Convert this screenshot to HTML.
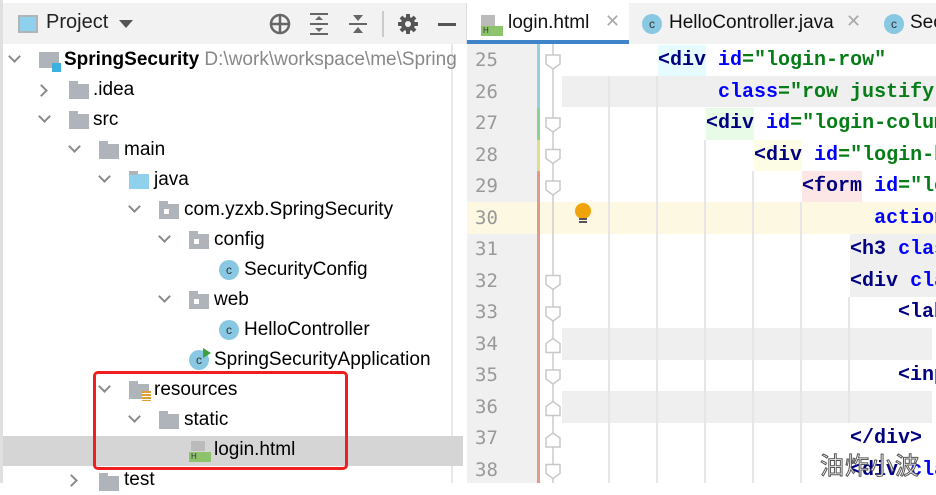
<!DOCTYPE html>
<html><head><meta charset="utf-8"><style>
*{margin:0;padding:0;box-sizing:border-box}
body{width:936px;height:483px;overflow:hidden;background:#fff;position:relative;font-family:"Liberation Sans","Noto Sans CJK SC",sans-serif}
.abs{position:absolute}
#left{left:0;top:0;width:466px;height:483px;background:#fff;border-left:3px solid #e0e0e0}
#lhead{left:3px;top:3px;width:463px;height:41px;background:#f2f2f2}
.row{position:absolute;left:0;height:30px;line-height:30px;font-size:19px;color:#000;white-space:nowrap}
.chev{position:absolute;width:9px;height:9px;border-right:2px solid #8a8a8a;border-bottom:2px solid #8a8a8a}
.down{transform:rotate(45deg)}
.right{transform:rotate(-45deg)}
.fold{position:absolute;width:20px;height:15px;background:#aeb4b9}
.fold:before{content:"";position:absolute;left:0;top:-3px;width:9px;height:4px;background:#aeb4b9}
.cic{position:absolute;width:20px;height:20px;border-radius:50%;background:#88c8e3;color:#333;font-size:12px;line-height:20px;text-align:center;font-family:"Liberation Sans",sans-serif}
#ed{left:466px;top:0;width:470px;height:483px;background:#fff}
.code{position:absolute;left:562px;font-family:"Liberation Mono","DejaVu Sans Mono",monospace;font-size:20px;font-weight:bold;white-space:pre;color:#000080;line-height:31.5px}
.ln{position:absolute;left:475px;width:40px;font-family:"DejaVu Sans Mono",monospace;font-size:19px;color:#999;line-height:31.5px}
.at{color:#0000ff}.st{color:#067d17}
.guide{position:absolute;width:2px;background:#e6e6e6}
</style></head><body>
<div class="abs" style="left:0;top:0;width:936px;height:3px;background:#d6d6d6"></div>
<div id="left" class="abs"></div>
<div id="lhead" class="abs"></div>
<div class="abs" style="left:18px;top:15px;width:20px;height:18px;border:2px solid #aeb4b9;background:#8fd0ec"></div>
<div class="abs" style="left:46px;top:11px;font-size:20px;color:#222">Project</div>
<div class="abs" style="left:119px;top:20px;width:0;height:0;border-left:7px solid transparent;border-right:7px solid transparent;border-top:8px solid #555"></div>
<svg class="abs" style="left:268px;top:12px" width="24" height="24"><circle cx="12" cy="12" r="9" fill="none" stroke="#666" stroke-width="2.5"/><path d="M12 3v18M3 12h18" stroke="#666" stroke-width="2.5"/></svg>
<svg class="abs" style="left:308px;top:12px" width="22" height="24"><path d="M2 2h18M2 22h18M2 12h18" stroke="#666" stroke-width="2"/><path d="M7 8l4-4 4 4zM7 16l4 4 4-4z" fill="#666"/></svg>
<svg class="abs" style="left:347px;top:12px" width="22" height="24"><path d="M2 12h18" stroke="#666" stroke-width="2"/><path d="M6 3l5 6 5-6zM6 21l5-6 5 6z" fill="#666"/></svg>
<div class="abs" style="left:382px;top:11px;width:2px;height:26px;background:#ccc"></div>
<svg class="abs" style="left:397px;top:13px" width="22" height="22"><g stroke="#555" stroke-width="4"><path d="M11 1v20M1 11h20M4 4l14 14M18 4L4 18"/></g><circle cx="11" cy="11" r="7" fill="#555"/><circle cx="11" cy="11" r="3" fill="#f2f2f2"/></svg>
<div class="abs" style="left:438px;top:23px;width:18px;height:3px;background:#555"></div>
<div class="abs" style="left:451px;top:44px;width:2px;height:439px;background:#e8e8e8"></div>
<div class="abs" style="left:3px;top:436px;width:460px;height:30px;background:#d5d5d5"></div>
<div class="chev down" style="left:10px;top:52px"></div>
<div class="abs" style="left:39px;top:52px;width:20px;height:16px;background:#aeb4b9"></div><div class="abs" style="left:52px;top:63px;width:9px;height:9px;background:#3cb1e0"></div>
<div class="row" style="left:64px;top:45px;font-weight:bold">SpringSecurity <span style="font-weight:normal;color:#888">D:\work\workspace\me\Spring</span></div>
<div class="chev right" style="left:37px;top:86px"></div>
<div class="fold" style="left:69px;top:84px"></div><div class="row" style="left:93px;top:75px">.idea</div>
<div class="chev down" style="left:40px;top:112px"></div>
<div class="fold" style="left:69px;top:114px"></div><div class="row" style="left:93px;top:105px">src</div>
<div class="chev down" style="left:70px;top:142px"></div>
<div class="fold" style="left:99px;top:144px"></div><div class="row" style="left:124px;top:135px">main</div>
<div class="chev down" style="left:100px;top:172px"></div>
<div class="fold" style="left:129px;top:174px;background:#8fd0ec"></div><div class="row" style="left:154px;top:165px">java</div>
<div class="chev down" style="left:130px;top:202px"></div>
<div class="fold" style="left:159px;top:204px"></div><div class="abs" style="left:164px;top:209px;width:5px;height:5px;background:#fff"></div><div class="row" style="left:184px;top:195px">com.yzxb.SpringSecurity</div>
<div class="chev down" style="left:160px;top:232px"></div>
<div class="fold" style="left:189px;top:234px"></div><div class="abs" style="left:194px;top:239px;width:5px;height:5px;background:#fff"></div><div class="row" style="left:214px;top:225px">config</div>
<div class="cic" style="left:219px;top:260px">c</div><div class="row" style="left:244px;top:255px">SecurityConfig</div>
<div class="chev down" style="left:160px;top:292px"></div>
<div class="fold" style="left:189px;top:294px"></div><div class="abs" style="left:194px;top:299px;width:5px;height:5px;background:#fff"></div><div class="row" style="left:214px;top:285px">web</div>
<div class="cic" style="left:219px;top:320px">c</div><div class="row" style="left:244px;top:315px">HelloController</div>
<div class="cic" style="left:189px;top:350px">c</div><div class="abs" style="left:203px;top:348px;width:0;height:0;border-top:5px solid transparent;border-bottom:5px solid transparent;border-left:8px solid #3ca03c"></div><div class="row" style="left:214px;top:345px">SpringSecurityApplication</div>
<div class="chev down" style="left:100px;top:382px"></div>
<div class="fold" style="left:129px;top:384px"></div><div class="abs" style="left:142px;top:391px;width:9px;height:10px;background:repeating-linear-gradient(#e0a030 0 2px,#fff 2px 3px)"></div><div class="row" style="left:154px;top:375px">resources</div>
<div class="chev down" style="left:130px;top:412px"></div>
<div class="fold" style="left:159px;top:414px"></div><div class="row" style="left:184px;top:405px">static</div>
<div class="abs" style="left:191px;top:441px;width:14px;height:10px;background:#bbb"></div><div class="abs" style="left:189px;top:452px;width:22px;height:10px;background:#8cc36b;font-size:8px;line-height:10px;color:#333;padding-left:2px">H</div>
<div class="row" style="left:214px;top:435px">login.html</div>
<div class="chev right" style="left:67px;top:476px"></div>
<div class="fold" style="left:99px;top:476px"></div><div class="row" style="left:124px;top:465px">test</div>
<div class="abs" style="left:93px;top:371px;width:255px;height:99px;border:3px solid #f01e1e;border-radius:5px"></div>

<div id="ed" class="abs"></div>
<div class="abs" style="left:466px;top:3px;width:470px;height:41px;background:#f2f2f2;border-left:1px solid #ddd"></div>
<div class="abs" style="left:467px;top:3px;width:162px;height:41px;background:#fff"></div>
<div class="abs" style="left:467px;top:40px;width:162px;height:4px;background:#4083c9"></div>
<div class="abs" style="left:481px;top:15px;width:14px;height:11px;background:#bbb"></div><div class="abs" style="left:481px;top:26px;width:22px;height:10px;background:#8cc36b;font-size:8px;line-height:10px;color:#333;padding-left:2px">H</div>
<div class="abs" style="left:508px;top:12px;font-size:19px;color:#111">login.html</div>
<div class="abs" style="left:605px;top:11px;font-size:18px;color:#aaa">✕</div>
<div class="cic" style="left:642px;top:14px">c</div>
<div class="abs" style="left:669px;top:12px;font-size:19px;color:#111">HelloController.java</div>
<div class="abs" style="left:846px;top:11px;font-size:18px;color:#aaa">✕</div>
<div class="cic" style="left:884px;top:14px">c</div>
<div class="abs" style="left:910px;top:12px;font-size:19px;color:#111">Sec</div>
<div class="abs" style="left:467px;top:44px;width:70px;height:439px;background:#f0f0f0"></div>
<div class="abs" style="left:467px;top:202px;width:469px;height:32px;background:#fdf8e2"></div>
<div class="abs" style="left:537px;top:44px;width:3px;height:64px;background:#8fd3e3"></div>
<div class="abs" style="left:537px;top:108px;width:3px;height:32px;background:#8ed08e"></div>
<div class="abs" style="left:537px;top:140px;width:3px;height:31px;background:#dfe08e"></div>
<div class="abs" style="left:537px;top:171px;width:3px;height:312px;background:#e39a8a"></div>
<div class="abs" style="left:552px;top:44px;width:2px;height:439px;background:#d8d8d8"></div>
<div class="abs" style="left:562px;top:76px;width:374px;height:31px;background:#efefef"></div>
<div class="abs" style="left:562px;top:328px;width:370px;height:32px;background:#efefef"></div>
<div class="abs" style="left:562px;top:391px;width:370px;height:32px;background:#efefef"></div>
<div class="abs" style="left:850px;top:234px;width:86px;height:63px;background:#efefef"></div>
<div class="guide" style="left:608px;top:76px;height:407px"></div>
<div class="guide" style="left:656px;top:76px;height:407px"></div>
<div class="guide" style="left:704px;top:140px;height:343px"></div>
<div class="guide" style="left:752px;top:171px;height:312px"></div>
<div class="guide" style="left:800px;top:202px;height:281px"></div>
<div class="guide" style="left:848px;top:297px;height:126px"></div>
<div class="abs" style="left:658px;top:45px;width:48px;height:31px;background:#e6fbff"></div>
<div class="abs" style="left:706px;top:108px;width:48px;height:32px;background:#e7fbe7"></div>
<div class="abs" style="left:754px;top:140px;width:48px;height:31px;background:#fdfde6"></div>
<div class="abs" style="left:802px;top:171px;width:60px;height:31px;background:#fde6e6"></div>
<svg class="abs" style="left:544px;top:44px" width="18" height="439"><g fill="#fff" stroke="#c8c8c8" stroke-width="1.5">
<path d="M2 11h14v9l-7 5-7-5z"/><path d="M2 74h14v9l-7 5-7-5z"/><path d="M2 105.5h14v9l-7 5-7-5z"/><path d="M2 137h14v9l-7 5-7-5z"/>
<path d="M2 231.5h14v9l-7 5-7-5z"/><path d="M2 263h14v9l-7 5-7-5z"/><path d="M2 299.5l7-5 7 5v9h-14z"/><path d="M2 326h14v9l-7 5-7-5z"/><path d="M2 362.5l7-5 7 5v9h-14z"/><path d="M2 394l7-5 7 5v9h-14z"/><path d="M2 420.5h14v9l-7 5-7-5z"/></g></svg>
<div class="abs" style="left:575px;top:203px;width:16px;height:16px;border-radius:50%;background:#f0a30a"></div>
<div class="abs" style="left:579px;top:218px;width:8px;height:5px;border-top:2px solid #555;border-bottom:2px solid #555"></div>
<div class="ln" style="top:45px">25<br>26<br>27<br>28<br>29<br>30<br>31<br>32<br>33<br>34<br>35<br>36<br>37<br>38</div>
<div class="code" style="top:45px">        &lt;div <span class="at">id</span><span class="st">="login-row"</span>
             <span class="at">class</span><span class="st">="row justify-</span>
            &lt;div <span class="at">id</span><span class="st">="login-column</span>
                &lt;div <span class="at">id</span><span class="st">="login-b</span>
                    &lt;form <span class="at">id</span><span class="st">="lo</span>
                          <span class="at">action</span>
                        &lt;h3 <span class="at">clas</span>
                        &lt;div <span class="at">cla</span>
                            &lt;lab
                            
                            &lt;inp
                            
                        &lt;/div&gt;
                        &lt;div <span class="at">cla</span></div>
<div class="abs" style="left:820px;top:446px;font-family:'Noto Sans CJK SC',sans-serif;font-size:24px;color:#fff;-webkit-text-stroke:1px #555;letter-spacing:1px">油炸小波</div>
</body></html>
